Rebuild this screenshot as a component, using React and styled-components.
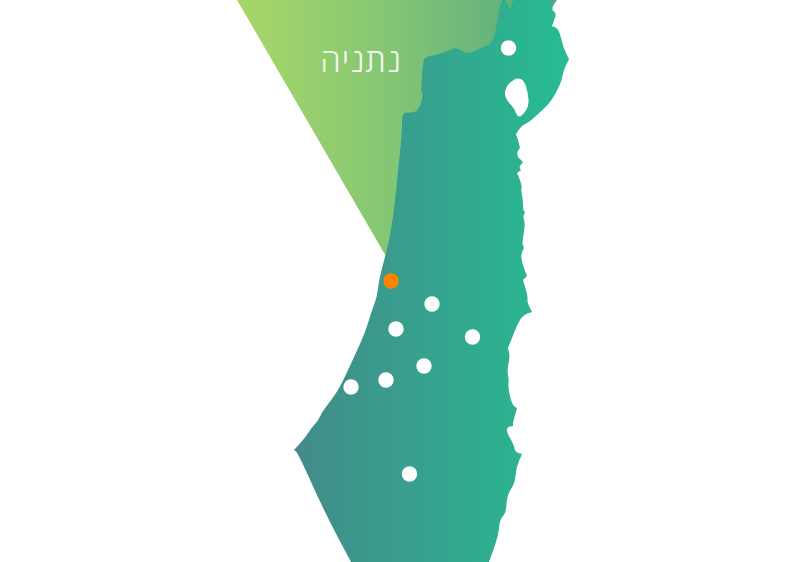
import React from 'react'
import styled, { createGlobalStyle } from 'styled-components'

const GlobalStyle = createGlobalStyle`
  html, body {
    margin: 0;
    padding: 0;
    background: #fff;
  }
`

const Stage = styled.div`
  position: relative;
  width: 800px;
  height: 562px;
  overflow: hidden;
  background: #fff;
`

const MapSvg = styled.svg`
  display: block;
  width: 800px;
  height: 562px;
`

const Marker = styled.circle`
  fill: ${(p) => (p.$active ? '#ff8400' : '#fff')};
`

const CityLabel = styled.div`
  position: absolute;
  left: 300px;
  top: 38px;
  width: 102px;
  direction: rtl;
  text-align: right;
  color: #fff;
  font-family: "Open Sans", "Noto Sans", "DejaVu Sans", sans-serif;
  font-weight: 300;
  font-size: 33px;
  line-height: 44px;
  letter-spacing: 1px;
  opacity: 0.9;
  white-space: nowrap;
`

// traced coast, clockwise from the northern tip. tips are listed twice to stay sharp
const coast = [
  [502, 0], [504, -3], [510, 9], [510, 9], [514, -3], [551, -2], [553, 8], [552, 10], [556, 13], [555, 18], [552, 26], [552, 26], [559, 29],
  [563, 47], [569, 59], [569, 59], [563, 72], [562, 80], [555, 95], [548, 105], [537, 115], [528, 123], [522, 125], [516, 134], [516, 134], [518, 140],
  [520, 148], [520, 148], [517, 152], [518, 157], [518, 157], [523, 162], [523, 162], [519, 167], [521, 170], [521, 170], [517, 173], [517, 173], [520, 180], [522, 187], [521, 190], [523, 200], [523, 210],
  [525, 212], [525, 212], [523, 217], [525, 223], [524, 232], [522, 243], [524, 248], [524, 248], [521, 254], [522, 263], [527, 276], [527, 276], [523, 280], [523, 280],
  [528, 297], [527, 302], [532, 312], [532, 312], [523, 315], [517, 325], [512, 338], [508, 348], [508, 348], [510, 357], [507, 370], [509, 380], [508, 387],
  [512, 405], [517, 408], [517, 408], [513, 422], [513, 426], [513, 426], [507, 427], [507, 433], [514, 445], [515, 452], [522, 454], [522, 454],
  [516, 468], [515, 483], [507, 495], [506, 513], [500, 519], [498, 537], [489, 562], [484, 575], [358, 575], [358, 575],
  [351, 562], [325, 513], [298, 453], [294, 450], [294, 450], [305, 438], [312, 427], [318, 421], [322, 412], [335, 395], [342, 383], [355, 355],
  [365, 333], [372, 310], [377, 297], [379, 280], [385, 257], [390, 237], [395, 203], [398, 170], [402, 133], [402, 115], [406, 112], [415, 113],
  [421, 105], [423, 93], [421, 92], [423, 62], [425, 57], [440, 54], [447, 51], [457, 47], [467, 55], [485, 46], [492, 43], [496, 30], [499, 10],
]

const lakeShore = [
  [517, 78], [524, 80], [528, 93], [529, 105], [524, 114], [518, 118], [514, 108], [509, 103], [504, 95], [507, 85], [512, 81],
]

// rounds a closed polyline with quadratics through the segment midpoints
const smooth = (pts) => {
  const mid = (a, b) => [(a[0] + b[0]) / 2, (a[1] + b[1]) / 2]
  const start = mid(pts[pts.length - 1], pts[0])
  let d = `M${start[0]} ${start[1]}`
  pts.forEach((p, i) => {
    const m = mid(p, pts[(i + 1) % pts.length])
    d += ` Q${p[0]} ${p[1]} ${m[0]} ${m[1]}`
  })
  return d + ' Z'
}

const cities = [
  { x: 508.5, y: 48 },
  { x: 432, y: 304 },
  { x: 396, y: 329 },
  { x: 472.5, y: 337 },
  { x: 424, y: 366 },
  { x: 386, y: 380 },
  { x: 351, y: 387 },
  { x: 409.5, y: 474 },
  { x: 391, y: 281, active: true },
]

const App = () => {
  return (
    <Stage>
      <GlobalStyle />
      <MapSvg viewBox="0 0 800 562">
        <defs>
          <linearGradient id="beam" gradientUnits="userSpaceOnUse" x1="237" y1="0" x2="557" y2="0">
            <stop offset="0" stopColor="#a8d768" />
            <stop offset="0.5" stopColor="#82c574" />
            <stop offset="1" stopColor="#55a87f" />
          </linearGradient>
          <linearGradient id="land" gradientUnits="userSpaceOnUse" x1="294" y1="0" x2="569" y2="0">
            <stop offset="0" stopColor="#438a8a" />
            <stop offset="1" stopColor="#27bc92" />
          </linearGradient>
        </defs>
        <polygon points="237,0 557,0 387,258" fill="url(#beam)" />
        <path d={smooth(coast)} fill="url(#land)" />
        <path d={smooth(lakeShore)} fill="#fff" />
        {cities.map((c) => (
          <Marker key={`${c.x}-${c.y}`} cx={c.x} cy={c.y} r="7.7" $active={c.active} />
        ))}
      </MapSvg>
      <CityLabel>נתניה</CityLabel>
    </Stage>
  )
}

export default App
